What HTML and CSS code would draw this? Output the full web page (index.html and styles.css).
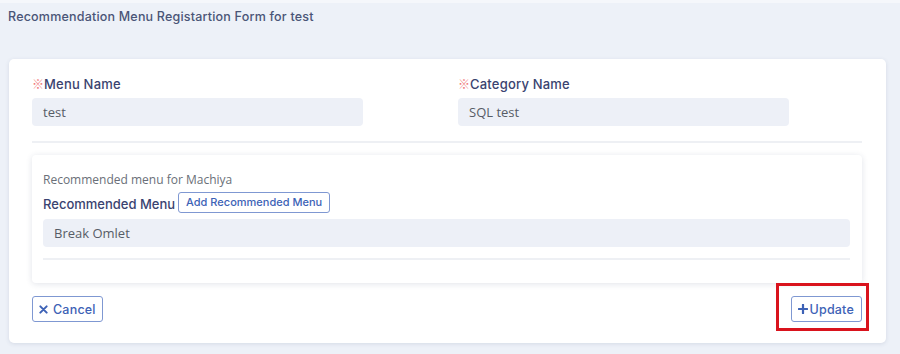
FILE: index.html
```html
<!DOCTYPE html>
<html lang="en">
<head>
<meta charset="utf-8">
<title>Recommendation Menu Registartion Form</title>
<link rel="stylesheet" href="styles.css">
</head>
<body>
<div class="topline"></div>
<h1 class="page-title">Recommendation Menu Registartion Form for test</h1>
<div class="card">
  <div class="form-row">
    <div class="field">
      <label class="label"><span class="req">※</span>Menu Name</label>
      <div class="input">test</div>
    </div>
    <div class="field">
      <label class="label"><span class="req">※</span>Category Name</label>
      <div class="input">SQL test</div>
    </div>
  </div>
  <hr class="divider">
  <div class="inner-card">
    <div class="subtitle">Recommended menu for Machiya</div>
    <div class="rec-row">
      <span class="label rec-label">Recommended Menu</span>
      <button class="btn btn-small">Add Recommended Menu</button>
    </div>
    <div class="input input-wide">Break Omlet</div>
    <hr class="divider inner-divider">
  </div>
  <div class="footer">
    <button class="btn btn-action"><svg class="ico" viewBox="0 0 10 10" width="9" height="9"><path d="M1.5 1.5 L8.5 8.5 M8.5 1.5 L1.5 8.5" stroke="currentColor" stroke-width="2.2" stroke-linecap="round"/></svg>Cancel</button>
    <div class="highlight-wrap">
      <button class="btn btn-action btn-update"><svg class="ico" viewBox="0 0 10 10" width="10" height="10"><path d="M5 0.8 V9.2 M0.8 5 H9.2" stroke="currentColor" stroke-width="2.2" stroke-linecap="round"/></svg>Update</button>
      <span class="highlight"></span>
    </div>
  </div>
</div>
</body>
</html>
```
FILE: styles.css
```css
* { box-sizing: border-box; }
html, body { margin: 0; padding: 0; }
body {
  background: #edf1f8;
  font-family: "Inter", "Noto Sans", sans-serif;
  width: 900px;
  height: 354px;
  overflow: hidden;
}
.topline {
  height: 3px;
  background: #f5f7fb;
}
.page-title {
  margin: 0;
  padding: 6px 8px 0 8px;
  height: 56px;
  font-size: 12.5px;
  line-height: 16px;
  font-weight: 500;
  color: #4a5577;
  letter-spacing: 0.2px;
}
.card {
  margin: 0 14px 0 9px;
  background: #fff;
  border-radius: 5px;
  box-shadow: 0 1px 4px rgba(40, 60, 100, 0.12);
  padding: 16px 24px 22px 23px;
  height: 284px;
}
.form-row {
  display: grid;
  grid-template-columns: 426px 1fr;
}
.field { display: flex; flex-direction: column; }
.label {
  font-size: 13px;
  line-height: 18px;
  font-weight: 500;
  color: #3a4370;
  letter-spacing: 0.2px;
}
.req {
  color: #f07a7a;
  font-weight: 400;
  font-size: 12px;
  font-family: "Noto Sans CJK JP", sans-serif;
  letter-spacing: 0;
}
.input {
  margin-top: 5px;
  width: 331px;
  height: 28px;
  border-radius: 4px;
  background: #edf0f7;
  padding: 0 11px;
  font-family: "Open Sans", sans-serif;
  font-size: 13px;
  line-height: 28px;
  color: #575c66;
}
.divider {
  margin: 15px 0 0 0;
  border: 0;
  border-top: 2px solid #eef0f4;
  height: 0;
}
.inner-card {
  margin-top: 12px;
  background: #fff;
  border-radius: 4px;
  box-shadow: 0 1px 6px rgba(40, 60, 100, 0.14);
  padding: 16px 12px 22px 11px;
  height: 128px;
}
.subtitle {
  font-family: "Open Sans", sans-serif;
  font-size: 12px;
  line-height: 18px;
  color: #6a6f78;
}
.rec-row {
  margin-top: 2px;
  display: flex;
  align-items: center;
  gap: 3px;
}
.rec-label { padding-top: 4px; letter-spacing: 0; }
.btn {
  font-family: "Inter", "Noto Sans", sans-serif;
  background: #fff;
  color: #3d62b6;
  border: 1px solid #7f98d2;
  border-radius: 3px;
  cursor: pointer;
  display: inline-flex;
  align-items: center;
}
.btn-small {
  height: 21px;
  padding: 0 7px;
  font-size: 11px;
  font-weight: 500;
  letter-spacing: 0;
}
.input-wide {
  width: auto;
  margin-top: 6px;
}
.inner-divider { margin-top: 11px; }
.footer {
  margin-top: 13px;
  display: flex;
  justify-content: space-between;
  align-items: center;
}
.btn-action {
  height: 26px;
  padding: 0 6px;
  font-size: 12.5px;
  font-weight: 500;
  gap: 5px;
  letter-spacing: 0.2px;
}
.btn-update { gap: 2px; padding: 0 7px 0 6px; }
.ico { display: block; }
.highlight-wrap { position: relative; }
.highlight {
  position: absolute;
  left: -15px;
  top: -13px;
  right: -7px;
  bottom: -9px;
  border: 3px solid #d9131d;
  pointer-events: none;
}
```
